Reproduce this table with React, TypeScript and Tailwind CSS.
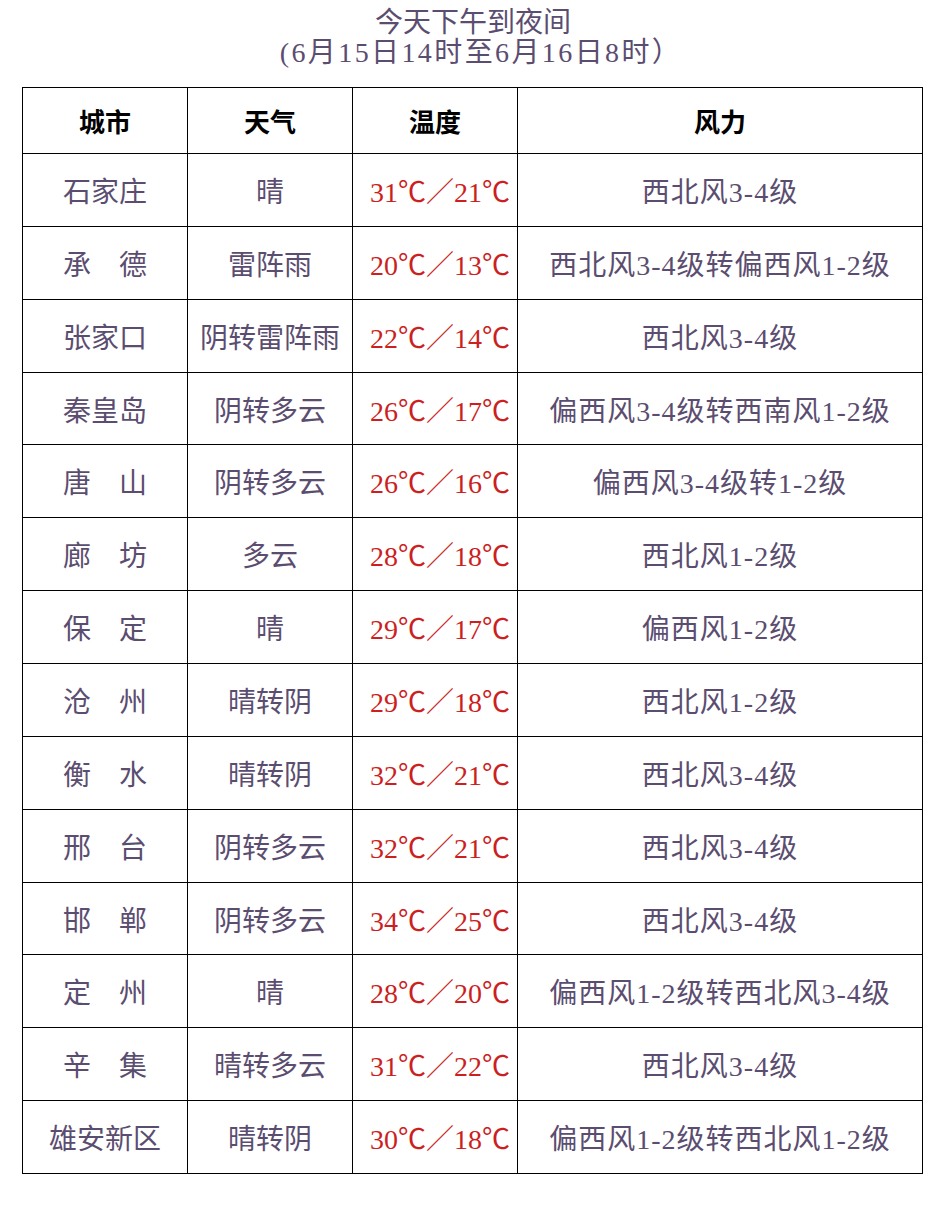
import React from "react";

const rows: [string, string, string, string][] = [
  ["石家庄", "晴", "31℃／21℃", "西北风3-4级"],
  ["承　德", "雷阵雨", "20℃／13℃", "西北风3-4级转偏西风1-2级"],
  ["张家口", "阴转雷阵雨", "22℃／14℃", "西北风3-4级"],
  ["秦皇岛", "阴转多云", "26℃／17℃", "偏西风3-4级转西南风1-2级"],
  ["唐　山", "阴转多云", "26℃／16℃", "偏西风3-4级转1-2级"],
  ["廊　坊", "多云", "28℃／18℃", "西北风1-2级"],
  ["保　定", "晴", "29℃／17℃", "偏西风1-2级"],
  ["沧　州", "晴转阴", "29℃／18℃", "西北风1-2级"],
  ["衡　水", "晴转阴", "32℃／21℃", "西北风3-4级"],
  ["邢　台", "阴转多云", "32℃／21℃", "西北风3-4级"],
  ["邯　郸", "阴转多云", "34℃／25℃", "西北风3-4级"],
  ["定　州", "晴", "28℃／20℃", "偏西风1-2级转西北风3-4级"],
  ["辛　集", "晴转多云", "31℃／22℃", "西北风3-4级"],
  ["雄安新区", "晴转阴", "30℃／18℃", "偏西风1-2级转西北风1-2级"],
];

const font = { fontFamily: '"Liberation Serif", "Noto Sans CJK SC", serif' };

export default function App() {
  return (
    <div className="w-[942px] h-[1218px] bg-white" style={font}>
      <div className="pt-[8px] text-center text-[28px] leading-[30px] text-[#5b4d70]">
        <div className="pl-[4px]">今天下午到夜间</div>
        <div className="pl-[20px] tracking-[2.4px]">(6月15日14时至6月16日8时）</div>
      </div>
      <table className="ml-[22px] mt-[19px] w-[901px] border-collapse table-fixed">
        <colgroup>
          <col className="w-[165px]" />
          <col className="w-[165px]" />
          <col className="w-[165px]" />
          <col />
        </colgroup>
        <thead>
          <tr className="h-[66px]">
            {["城市", "天气", "温度", "风力"].map((h) => (
              <th key={h} className="border border-black pt-[6px] text-center text-[26px] font-bold text-black">
                {h}
              </th>
            ))}
          </tr>
        </thead>
        <tbody>
          {rows.map((r) => (
            <tr key={r[0]} className="h-[72.86px]">
              <td className="border border-black pt-[6px] text-center text-[28px] text-[#5b4d70] whitespace-nowrap">{r[0]}</td>
              <td className="border border-black pt-[6px] text-center text-[28px] text-[#5b4d70] whitespace-nowrap">{r[1]}</td>
              <td className="border border-black pt-[6px] pl-[10px] text-center text-[28px] text-[#cc1f1f] whitespace-nowrap">{r[2]}</td>
              <td className="border border-black pt-[6px] text-center text-[28px] tracking-[1px] text-[#5b4d70] whitespace-nowrap">{r[3]}</td>
            </tr>
          ))}
        </tbody>
      </table>
    </div>
  );
}
